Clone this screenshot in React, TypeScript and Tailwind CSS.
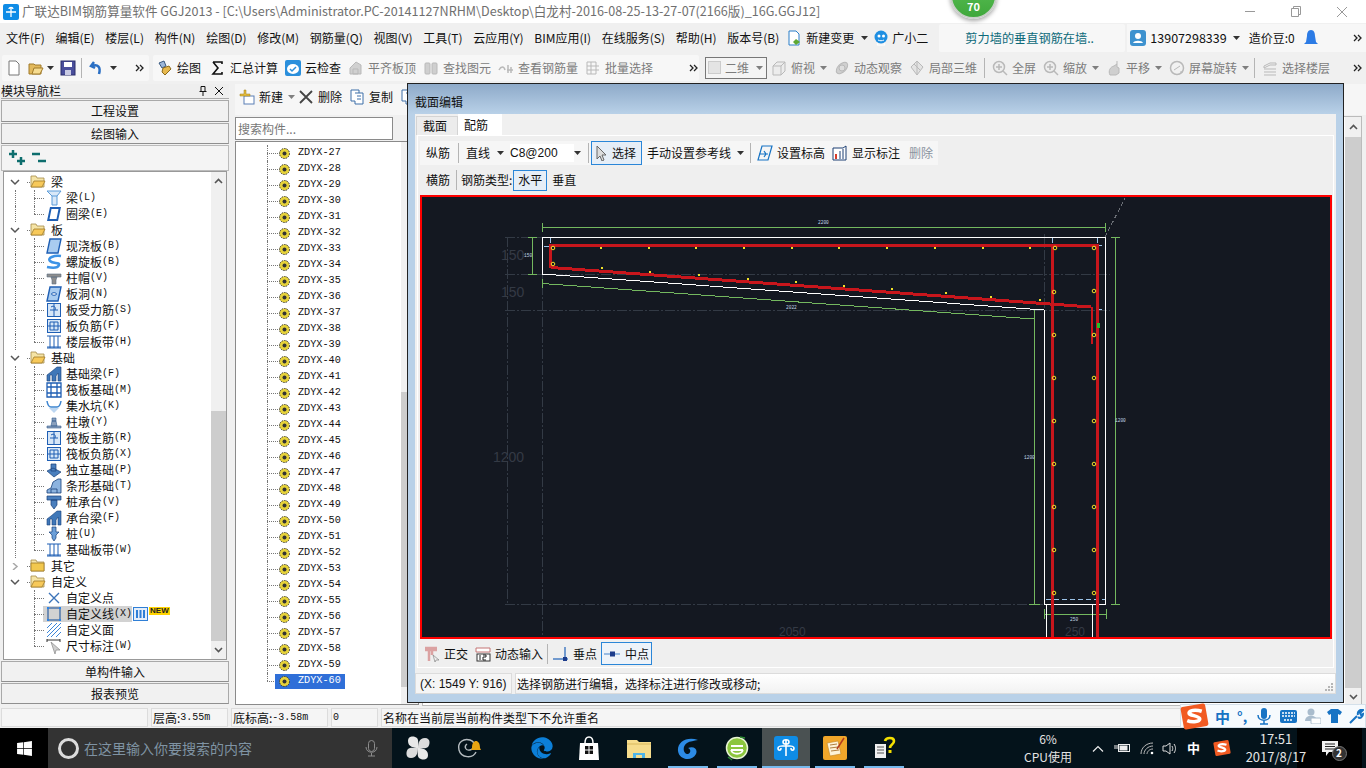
import React from "react"
import { FaWindows, FaEdge } from "react-icons/fa"

const Caret = ({ className = "" }: { className?: string }) => (
  <svg width="7" height="4" viewBox="0 0 7 4" className={className}>
    <path d="M0 0h7L3.500 4z" fill="#333" />
  </svg>
)

const More = () => (
  <svg width="9" height="8" viewBox="0 0 9 8" fill="none" stroke="#222" strokeWidth="1.300" className="shrink-0">
    <path d="M1 1l3 3-3 3M5 1l3 3-3 3" />
  </svg>
)

const Sep = ({ className = "" }: { className?: string }) => <div className={`h-[20px] w-px bg-[#b4b4b4] ${className}`} />

// --- small app icons, drawn by hand ---
type IconProps = { kind: string }

const ToolIcon = ({ kind }: IconProps) => {
  const g = "#b9b9b9"
  return (
    <svg width="16" height="16" viewBox="0 0 16 16" fill="none" className="shrink-0">
      {kind === "new" && <path d="M3 1h7l3 3v11H3z" fill="#fff" stroke="#777" />}
      {kind === "open" && (
        <>
          <path d="M1 4h5l1 1h6v9H1z" fill="#e2b95c" stroke="#a07a2a" />
          <path d="M4 14l2-6h9l-3 6z" fill="#f6dc90" stroke="#a07a2a" />
        </>
      )}
      {kind === "save" && (
        <>
          <rect x="1" y="1" width="14" height="14" fill="#4a4f9c" stroke="#2b2e6b" />
          <rect x="4" y="2" width="8" height="5" fill="#fff" />
          <rect x="5" y="10" width="6" height="5" fill="#c9cbe4" />
        </>
      )}
      {kind === "undo" && <path d="M5 2L2 6l4 2M3 6c6-2 9 1 7 8" stroke="#2a6fc4" strokeWidth="2.500" />}
      {kind === "draw" && (
        <>
          <path d="M2 3l5-2 2 5-4 2z" fill="#9db7d8" stroke="#38587f" />
          <path d="M6 8l6-2 2 3-6 6-3-3z" fill="#e7b94e" stroke="#8b6a1d" />
        </>
      )}
      {kind === "sigma" && <path d="M3 2h9v2M12 12v2H3l5-6-5-6" stroke="#111" strokeWidth="1.600" />}
      {kind === "cloud" && (
        <>
          <rect x="0" y="0" width="16" height="16" rx="2" fill="#2a8fdc" />
          <ellipse cx="8" cy="9" rx="6" ry="5" fill="#fff" />
          <path d="M5 9l2 2 4-4" stroke="#2a8fdc" strokeWidth="1.500" />
        </>
      )}
      {kind === "flat" && <path d="M2 14V8l6-6 5 3v9zM5 9h5v5H5z" fill="#d0d0d0" stroke={g} />}
      {kind === "find" && (
        <>
          <rect x="2" y="3" width="5" height="11" rx="1" fill="#cfcfcf" stroke={g} />
          <rect x="9" y="3" width="5" height="11" rx="1" fill="#cfcfcf" stroke={g} />
        </>
      )}
      {kind === "view" && <path d="M1 10c2-4 5-4 6 0M9 10h6M10 5v8M13 7v6" stroke={g} strokeWidth="1.500" />}
      {kind === "batch" && <path d="M2 2h9v12H2zM2 6h12M2 10h12M6 2v12" stroke={g} />}
      {kind === "box" && <path d="M2 6l4-4h8v9l-4 4H2zM2 6h8v9M10 6l4-4" stroke={g} fill="#ececec" />}
      {kind === "orbit" && (
        <>
          <ellipse cx="8" cy="8" rx="7" ry="4" transform="rotate(-45 8 8)" fill="#cfcfcf" stroke={g} />
          <circle cx="8" cy="8" r="3" fill="#dedede" stroke={g} />
        </>
      )}
      {kind === "local" && <path d="M8 1l6 6-6 8-6-8zM5 4l6 6M8 1v14" stroke={g} fill="#e3e3e3" />}
      {kind === "zoom" && (
        <>
          <circle cx="7" cy="7" r="5.500" fill="#eeeeee" stroke={g} strokeWidth="1.500" />
          <path d="M11 11l4 4M7 4v6M4 7h6" stroke={g} strokeWidth="1.500" />
        </>
      )}
      {kind === "pan" && <path d="M4 15c-2-4 0-8 4-9l3-2v3l2 1v5l-3 2zM11 1v3" stroke={g} fill="#cfcfcf" />}
      {kind === "rotate" && (
        <>
          <circle cx="8" cy="8" r="6.500" stroke={g} strokeWidth="1.500" fill="#f1f1f1" />
          <path d="M5 10l6-4M11 12h3" stroke={g} />
        </>
      )}
      {kind === "floors" && <path d="M2 6l6-3h6v2H8L2 8zM2 9h12M2 12h12M2 15h12" stroke={g} />}
      {kind === "doc" && (
        <>
          <path d="M3 1h7l3 3v11H3z" fill="#fff" stroke="#2a7fc9" />
          <path d="M10 9l4 3-4 3-3-3z" fill="#5ea832" />
        </>
      )}
      {kind === "robot" && (
        <>
          <circle cx="8" cy="7" r="6.500" fill="#1f8fe2" />
          <circle cx="6" cy="6" r="1.500" fill="#fff" />
          <circle cx="10.500" cy="6" r="1.500" fill="#fff" />
          <path d="M5 10c2 1 4 1 6 0M5 13l-1 2h8l-1-2" stroke="#fff" />
        </>
      )}
      {kind === "user" && (
        <>
          <rect x="0" y="0" width="16" height="16" rx="3" fill="#3e92cf" />
          <circle cx="8" cy="6" r="3" fill="#fff" />
          <path d="M3 13c1-3 9-3 10 0z" fill="#fff" />
        </>
      )}
      {kind === "bell" && <path d="M8 0c3 0 4 3 4 6l1 6 2 2H1l2-2 1-6c0-3 1-6 4-6z" fill="#2c7be5" />}
      {kind === "add" && (
        <>
          <rect x="5" y="7" width="10" height="8" fill="#fff" stroke="#5b7fb5" />
          <path d="M5 5V1h2v4h4v2H1V5z" fill="#e3bc3c" stroke="#9d7d1b" strokeWidth=".5" />
        </>
      )}
      {kind === "x" && <path d="M2 2l12 12M14 2L2 14" stroke="#444" strokeWidth="1.800" />}
      {kind === "copy" && <path d="M2 1h8v3h4v11H6v-3H2zM6 4h4M8 7h4M8 10h4" stroke="#3d6ea8" fill="#fff" />}
      {kind === "cursor" && <path d="M3 1l9 9H8l2 5-2 1-2-5-3 3z" fill="#dcdcdc" stroke="#666" />}
      {kind === "level" && <path d="M5 1h10l-4 14H1zM2 9h9M7 6l2 3-2 3" stroke="#1673c4" strokeWidth="1.200" />}
      {kind === "mark" && (
        <>
          <path d="M1 3h10l3-2v14H1z" fill="#fff" stroke="#1d3f73" />
          <rect x="3" y="9" width="2" height="5" fill="#d83c2a" />
          <path d="M8 6v8M11 4v10" stroke="#1d3f73" />
        </>
      )}
      {kind === "ortho" && (
        <>
          <path d="M1 2h12M1 4h12M5 3v12M8 3v6" stroke="#dba2a2" strokeWidth="2.500" />
          <path d="M9 9l6 5-3 0-1 2z" fill="#eee" stroke="#777" strokeWidth=".6" />
        </>
      )}
      {kind === "dyn" && (
        <>
          <path d="M1 2h14v4H1z" fill="#fff" stroke="#c47474" />
          <rect x="2" y="8" width="13" height="7" fill="#fff" stroke="#333" />
          <path d="M5 9v5M8 9h3v2H8v3h3" stroke="#222" />
        </>
      )}
      {kind === "perp" && (
        <>
          <path d="M0 13h15M12 1v12" stroke="#4a7fc4" strokeWidth="1.500" />
          <rect x="10" y="11" width="4" height="4" fill="#1c3c8c" />
        </>
      )}
      {kind === "mid" && (
        <>
          <path d="M0 8h16" stroke="#7da8da" strokeWidth="1.500" />
          <rect x="6" y="5.500" width="5" height="5" fill="#1c3c8c" />
        </>
      )}
    </svg>
  )
}

const Tool = ({ kind, label, dim, caret, className = "" }: { kind: string; label: string; dim?: boolean; caret?: boolean; className?: string }) => (
  <div className={`flex items-center gap-[4px] ${className}`}>
    <ToolIcon kind={kind} />
    <span className={dim ? "whitespace-nowrap text-[#7c7c7c]" : "whitespace-nowrap"}>{label}</span>
    {caret && <Caret className="ml-[1px] opacity-60" />}
  </div>
)

const TreeIcon = ({ kind }: IconProps) => {
  const b = "#1f5fb4"
  const l = "#a9ccf0"
  return (
    <svg width="16" height="16" viewBox="0 0 16 16" fill="none" className="shrink-0">
      {kind === "beam" && <path d="M1 1h14l-4 5v9H6V6zM6 6h5" stroke="#5b9bd8" fill="#d8e8f8" />}
      {kind === "ring" && <path d="M4 1h11l-3 14H1zM5.500 3h7l-2 10h-7z" fill={b} fillRule="evenodd" />}
      {kind === "slab" && <path d="M4 1h11l-3 14H1z" fill={l} stroke={b} strokeWidth="1.400" />}
      {kind === "spiral" && <path d="M15 2C8 1 1 4 4 7s10 1 9 4-7 3-12 2" stroke="#3d93e6" strokeWidth="2.500" />}
      {kind === "cap" && <path d="M1 4h14v3H1zM5 7h6l-1 3v4H6v-4z" fill="#8e8e8e" stroke="#5d6e85" strokeWidth=".6" />}
      {kind === "hole" && (
        <>
          <path d="M4 1h11l-3 14H1z" fill={l} stroke={b} strokeWidth="1.400" />
          <ellipse cx="8" cy="8" rx="2.500" ry="1.300" stroke={b} fill="#fff" />
        </>
      )}
      {(kind === "grid" || kind === "rebar") && (
        <>
          <rect x="1.500" y="1.500" width="13" height="13" fill="#d6e6f7" stroke={b} />
          <path d={kind === "grid" ? "M1 8h14M8 4v8M4 4h8v8H4z" : "M4 8h8M8 1v14M5 5c3-2 5 0 4 3"} stroke={b} />
        </>
      )}
      {kind === "band" && <path d="M1 2h14M1 14h14M4 2v12M8 2v12M12 2v12M1 13h14" stroke={b} />}
      {kind === "fbeam" && <path d="M1 15V9l4-3 6-5h4v14h-3V7l-2 3v5H6V9H4v6z" fill="#3f77b8" stroke="#173f78" strokeWidth=".6" />}
      {kind === "raft" && <path d="M1 1h14v14H1zM1 5h14M1 11h14M5 1v14M11 1v14" stroke={b} strokeWidth="1.300" />}
      {kind === "pit" && (
        <>
          <path d="M1 3c1 6 3 6 4 6h6c1 0 3 0 4-6" stroke="#3d85d0" strokeWidth="1.500" />
          <path d="M3 10l5 5 5-5z" fill="#bcd6f1" />
        </>
      )}
      {kind === "pier" && <path d="M1 12h14v2H1zM5 12l1-5h4l1 5zM6 4h4v3H6z" fill="#8aa0bd" stroke="#365f92" strokeWidth=".6" />}
      {kind === "iso" && <path d="M1 9l6-3 8 4-7 5zM5 2h5v7H5z" fill="#4a7fbd" stroke="#173f78" strokeWidth=".7" />}
      {kind === "strip" && <path d="M1 15v-3l4-2 2-6 5-3h3v14zM5 15v-4h6v4" stroke="#173f78" fill="#8cb3df" strokeWidth=".8" />}
      {kind === "pilecap" && <path d="M1 2h14v4H1zM5 6h6v5l-3 4-3-4z" fill="#4a7fbd" stroke="#173f78" strokeWidth=".7" />}
      {kind === "pile" && <path d="M6 1h4v5h3l-3 3v3l-2 3-2-3V9L3 6h3z" fill="#6c9fd8" stroke="#173f78" strokeWidth=".7" />}
      {kind === "point" && <path d="M3 3l10 10M13 3L3 13" stroke="#3b73b8" strokeWidth="1.400" />}
      {kind === "line" && (
        <>
          <rect x="2" y="2" width="12" height="12" stroke="#2f5f9f" strokeWidth="1.200" />
          <path d="M1 1h2v2H1zM13 1h2v2h-2zM1 13h2v2H1zM13 13h2v2h-2z" fill="#2b83e6" />
        </>
      )}
      {kind === "face" && <path d="M1 6l5-5M1 11L11 1M1 15L15 1M5 15L15 5M10 15l5-5" stroke="#3b85d8" />}
      {kind === "dim" && (
        <>
          <path d="M1 1v3M1 2h13M14 1v3" stroke="#333" />
          <path d="M5 4l9 8-4 0-1 4z" fill="#cfcfcf" stroke="#888" strokeWidth=".7" />
        </>
      )}
    </svg>
  )
}

const Folder = ({ open }: { open?: boolean }) => (
  <svg width="16" height="14" viewBox="0 0 16 14" fill="none" className="shrink-0">
    <path d="M1 3V1h5l1 2h7v9H1z" fill="#f5e4a6" stroke="#a58a4a" strokeWidth=".8" />
    {open ? <path d="M1 12l3-6h11l-3 6z" fill="#f7c95a" stroke="#a07a2a" strokeWidth=".8" /> : <path d="M1 4h13v8H1z" fill="#f2c84e" stroke="#a07a2a" strokeWidth=".8" />}
  </svg>
)

type Row = { label: string; hot?: string; icon?: string; open?: boolean; folder?: boolean; last?: boolean; noTrunk?: boolean; picked?: boolean }

const treeRows: Row[] = [
  { label: "梁", folder: true, open: true },
  { label: "梁", hot: "(L)", icon: "beam" },
  { label: "圈梁", hot: "(E)", icon: "ring", last: true },
  { label: "板", folder: true, open: true },
  { label: "现浇板", hot: "(B)", icon: "slab" },
  { label: "螺旋板", hot: "(B)", icon: "spiral" },
  { label: "柱帽", hot: "(V)", icon: "cap" },
  { label: "板洞", hot: "(N)", icon: "hole" },
  { label: "板受力筋", hot: "(S)", icon: "rebar" },
  { label: "板负筋", hot: "(F)", icon: "grid" },
  { label: "楼层板带", hot: "(H)", icon: "band", last: true },
  { label: "基础", folder: true, open: true },
  { label: "基础梁", hot: "(F)", icon: "fbeam" },
  { label: "筏板基础", hot: "(M)", icon: "raft" },
  { label: "集水坑", hot: "(K)", icon: "pit" },
  { label: "柱墩", hot: "(Y)", icon: "pier" },
  { label: "筏板主筋", hot: "(R)", icon: "rebar" },
  { label: "筏板负筋", hot: "(X)", icon: "grid" },
  { label: "独立基础", hot: "(P)", icon: "iso" },
  { label: "条形基础", hot: "(T)", icon: "strip" },
  { label: "桩承台", hot: "(V)", icon: "pilecap" },
  { label: "承台梁", hot: "(F)", icon: "fbeam" },
  { label: "桩", hot: "(U)", icon: "pile" },
  { label: "基础板带", hot: "(W)", icon: "band", last: true },
  { label: "其它", folder: true },
  { label: "自定义", folder: true, open: true },
  { label: "自定义点", icon: "point", noTrunk: true },
  { label: "自定义线", hot: "(X)", icon: "line", noTrunk: true, picked: true },
  { label: "自定义面", icon: "face", noTrunk: true },
  { label: "尺寸标注", hot: "(W)", icon: "dim", noTrunk: true, last: true },
]

const TreeRow = ({ row }: { row: Row }) => {
  if (row.folder) {
    return (
      <div className="relative flex h-[16px] items-center">
        <svg width="10" height="7" viewBox="0 0 10 7" fill="none" className="ml-[6px]">
          {row.open ? <path d="M1 1l4 4 4-4" stroke="#555" strokeWidth="1.500" /> : <path d="M3 0l4 3.500L3 7" stroke="#a8a8a8" strokeWidth="1.500" />}
        </svg>
        <span className="ml-[7px] w-[3px] border-t border-dotted border-[#777]" />
        <Folder open={row.open} />
        <span className="ml-[5px] text-[12px] leading-none">{row.label}</span>
      </div>
    )
  }
  return (
    <div className="relative flex h-[16px] items-center pl-[39px]">
      {!row.noTrunk && <span className="absolute left-[11px] top-0 h-[16px] border-l border-dotted border-[#777]" />}
      <span className={`absolute left-[30px] top-0 border-l border-dotted border-[#777] ${row.last ? "h-[8px]" : "h-[16px]"}`} />
      <span className="absolute left-[30px] top-[8px] w-[10px] border-t border-dotted border-[#777]" />
      <div className={`flex h-[16px] items-center pl-[3px] ${row.picked ? "bg-[#d2d2d2]" : ""}`}>
        <TreeIcon kind={row.icon || "slab"} />
        <span className="ml-[4px] flex items-center whitespace-nowrap text-[12px] leading-none">
          {row.label}
          {row.hot && <span className="font-['Liberation_Mono',monospace] text-[10px]">{row.hot}</span>}
        </span>
      </div>
      {row.picked && (
        <>
          <svg width="15" height="14" viewBox="0 0 15 14" fill="none" className="ml-[1px]">
            <rect x=".5" y=".5" width="14" height="13" fill="#e4eefa" stroke="#2f7fd6" />
            <path d="M4 3v8M7.500 3v8M11 3v8" stroke="#2f7fd6" strokeWidth="2" />
          </svg>
          <span className="-mt-[7px] ml-[1px] bg-[#ffd400] px-px font-['Liberation_Sans',sans-serif] text-[8px] font-bold leading-[8px] text-[#222]">NEW</span>
        </>
      )}
    </div>
  )
}

const NavButton = ({ label, className = "" }: { label: string; className?: string }) => (
  <div className={`flex h-[21px] items-center justify-center border border-[#a9a9a9] border-b-[#8f8f8f] bg-[#f1f1f1] text-[12px] ${className}`}>{label}</div>
)

const ScrollArrow = ({ up }: { up?: boolean }) => (
  <svg width="9" height="6" viewBox="0 0 9 6" fill="none">
    <path d={up ? "M1 5l3.500-3.500L8 5" : "M1 1l3.500 3.500L8 1"} stroke="#555" strokeWidth="1.600" />
  </svg>
)

const componentNumbers = Array.from({ length: 34 }, (_, i) => i + 27)

// --- the section drawing ---
const topTicks = [600, 648, 695, 743, 791, 838, 886, 934, 982, 1029]
const slantTicks: [number, number][] = [[601, 267], [649, 271], [698, 274], [747, 278], [795, 281], [843, 285], [891, 288], [945, 292], [990, 296], [1039, 299]]
const ringPoints: [number, number][] = [[553, 248], [553, 264], [1055, 248], [1094, 248], [1054, 292], [1094, 291], [1054, 335], [1094, 335], [1054, 378], [1094, 378], [1054, 421], [1094, 421], [1054, 464], [1094, 464], [1054, 507], [1094, 507], [1054, 550], [1094, 550], [1054, 593], [1094, 593]]

const DIM = "#333a45"
const GREEN = "#74b85f"
const RED = "#c8161c"

const Drawing = () => (
  <svg viewBox="422 197 908 440" className="block h-[440px] w-[908px]" fill="none" shapeRendering="crispEdges">
    <g stroke={DIM} strokeDasharray="10 2 2 2">
      <path d="M505 237.500H542M505 274.500H1110M505 310.500H1110M505 604.500H1045" />
      <path d="M507.500 237V604M542.500 237V637M1044.500 234V310" />
      <path d="M1105 237L1125 198" stroke="#6b6f76" strokeDasharray="4 3" />
      <path d="M1092.500 604V637M1045 604H1105" strokeDasharray="3 2" />
    </g>
    <g stroke="#9cc3e8" strokeDasharray="5 3">
      <path d="M550 238V268M544 246H550M1052 238V245M1097 238V245M1097 245H1105M1097 309H1103M1046 599H1105" />
    </g>
    <g stroke={GREEN}>
      <path d="M542 227.500H1105M542 223V232M1105 223V232" />
      <path d="M532.500 237V274M528 237H537M528 274H537" />
      <path d="M542 283.500L1034 319M542 279V288" />
      <path d="M1034.500 310V604M1029 604H1040" />
      <path d="M1115.500 237V604M1111 237H1120M1111 604H1120" />
      <path d="M1044 614H1106M1044 609V619M1106 609V619" />
    </g>
    <g stroke="#fff">
      <path d="M542.500 274V237.500H1105.500V604.500H1044.500V310" />
      <path d="M542 274L1044 310" />
      <path d="M1046 637V604M1092 637V604" />
      <path d="M1096.500 307V344" />
    </g>
    <g stroke={RED}>
      <path d="M549 245.500H1099M550.500 245V268" strokeWidth="3" />
      <path d="M551 267.500L1091 307" strokeWidth="3" />
      <path d="M1052 245V637M1097.500 247V637" strokeWidth="3" />
      <path d="M1092 307V344" strokeWidth="2" />
    </g>
    <rect x="1097" y="323" width="3" height="5" fill="#22c028" />
    {topTicks.map((x) => (
      <rect key={x} x={x} y="247" width="2" height="2" fill="#f0e02a" />
    ))}
    {slantTicks.map(([x, y]) => (
      <rect key={x} x={x} y={y} width="2" height="2" fill="#f0e02a" />
    ))}
    <g stroke="#f0e02a" shapeRendering="auto">
      {ringPoints.map(([x, y]) => (
        <circle key={`${x}-${y}`} cx={x} cy={y} r="1.800" />
      ))}
    </g>
    <g shapeRendering="auto" fontFamily="'Liberation Sans', sans-serif" fill="#343a45" stroke="none">
      <text x="501" y="260" fontSize="14">150</text>
      <text x="501" y="297" fontSize="14">150</text>
      <text x="493" y="462" fontSize="14">1200</text>
      <text x="779" y="636" fontSize="12">2050</text>
      <text x="1065" y="636" fontSize="12">250</text>
    </g>
    <g shapeRendering="auto" fontFamily="'Liberation Mono', monospace" fill="#c5d8ea" fontSize="4.500" stroke="none">
      <text x="818" y="224">2200</text>
      <text x="524" y="257">150</text>
      <text x="786" y="309">2022</text>
      <text x="1024" y="459">1200</text>
      <text x="1115" y="422">1200</text>
      <text x="1070" y="621">250</text>
    </g>
  </svg>
)

const Dialog = () => (
  <div className="absolute left-[407px] top-[83px] flex h-[620px] w-[937px] flex-col border border-[#222] bg-[#b9d1e8]">
    <div className="flex h-[30px] shrink-0 items-end bg-gradient-to-b from-[#8eaac9] to-[#b9d1e8] pb-[3px] pl-[7px] text-[12px]">截面编辑</div>
    <div className="ml-[7px] flex w-[921px] flex-col bg-[#f0f0f0]">
      <div className="flex h-[21px] items-end pl-[1px] text-[12px]">
        <div className="flex h-[19px] w-[42px] items-center border border-b-0 border-[#d4d4d4] bg-[#ececec] pl-[6px]">截面</div>
        <div className="flex h-[21px] w-[44px] items-center bg-white pl-[6px]">配筋</div>
      </div>
      <div className="ml-[2px] flex h-[533px] w-[917px] flex-col border border-white bg-[#efefef] pl-[2px] text-[12px]">
        <div className="mt-[5px] flex h-[24px] items-center">
          <div className="flex h-[24px] items-center bg-[#f6f6f6] pl-[6px] pr-[5px]">
            <span>纵筋</span>
            <Sep className="ml-[8px]" />
            <span className="ml-[7px]">直线</span>
            <Caret className="ml-[7px]" />
            <span className="ml-[6px] w-[64px] bg-white font-['Liberation_Sans',sans-serif] text-[12px]">C8@200</span>
            <Caret />
            <Sep className="ml-[7px]" />
            <div className="ml-[2px] flex h-[24px] w-[51px] items-center gap-[2px] border border-[#2a86d8] bg-[#e6eef7] pl-[2px]">
              <ToolIcon kind="cursor" />
              <span>选择</span>
            </div>
            <span className="ml-[5px]">手动设置参考线</span>
            <Caret className="ml-[6px]" />
            <Sep className="ml-[6px]" />
            <Tool kind="level" label="设置标高" className="ml-[6px]" />
            <Tool kind="mark" label="显示标注" className="ml-[7px]" />
            <span className="ml-[9px] text-[#8a93a0]">删除</span>
          </div>
        </div>
        <div className="mt-[5px] flex h-[20px] items-center pl-[6px]">
          <span>横筋</span>
          <Sep className="ml-[6px] h-[16px]" />
          <span className="ml-[4px]">钢筋类型:</span>
          <div className="ml-[1px] flex h-[21px] w-[34px] items-center justify-center border border-[#2a86d8] bg-[#e6eef7]">水平</div>
          <span className="ml-[5px]">垂直</span>
        </div>
        <div className="mt-[5px] h-[444px] w-[912px] border-2 border-[#ff0000] bg-[#141821]">
          <Drawing />
        </div>
        <div className="mt-[2px] flex h-[25px] items-center pl-[4px]">
          <Tool kind="ortho" label="正交" />
          <Tool kind="dyn" label="动态输入" className="ml-[7px]" />
          <Sep className="ml-[4px]" />
          <Tool kind="perp" label="垂点" className="ml-[5px]" />
          <div className="ml-[4px] flex h-[23px] w-[51px] items-center gap-[5px] border border-[#2a86d8] bg-[#eef3f9] pl-[2px]">
            <ToolIcon kind="mid" />
            <span>中点</span>
          </div>
        </div>
      </div>
      <div className="h-[5px] bg-[#efefef]" />
      <div className="flex h-[21px] gap-[3px] bg-[#f0f0f0] text-[12px]">
        <div className="flex w-[97px] items-center border border-[#dcdcdc] bg-[#f5f5f5] pl-[4px] font-['Liberation_Sans',sans-serif]">(X: 1549 Y: 916)</div>
        <div className="relative flex flex-1 items-center border border-[#dcdcdc] bg-gradient-to-b from-white to-[#f2f2f2] pl-[1px]">
          选择钢筋进行编辑，选择标注进行修改或移动;
          <svg width="10" height="10" viewBox="0 0 10 10" className="absolute bottom-[1px] right-[1px]">
            <path d="M7 1h2v2H7zM4 4h2v2H4zM7 4h2v2H7zM1 7h2v2H1zM4 7h2v2H4zM7 7h2v2H7z" fill="#b5b5b5" />
          </svg>
        </div>
      </div>
    </div>
  </div>
)

const SogouLogo = ({ size }: { size: number }) => (
  <svg width={size} height={size} viewBox="0 0 28 28">
    <rect x="2" y="3" width="24" height="22" rx="2" fill="#f15a22" transform="rotate(-10 14 14)" />
    <path d="M21 9c-3-1-10-2-12 1s9 3 10 6-7 4-12 2" fill="none" stroke="#fff" strokeWidth="3.500" />
  </svg>
)

const SogouBar = () => (
  <div className="absolute left-[1180px] top-[704px] flex h-[24px] w-[186px] items-center border border-[#d4e0ea] bg-[#f6fafd] pl-[34px]">
    <div className="absolute -left-[1px] -top-[3px]">
      <SogouLogo size={29} />
    </div>
    <span className="text-[15px] font-bold leading-none text-[#1673c4]">中</span>
    <span className="ml-[7px] text-[14px] font-bold leading-none text-[#1673c4]">°,</span>
    <svg width="14" height="17" viewBox="0 0 14 17" className="ml-[10px]" fill="none">
      <rect x="4" y="0" width="6" height="11" rx="3" fill="#1673c4" />
      <path d="M1 7c0 7 12 7 12 0M7 13v3M3 16h8" stroke="#1673c4" strokeWidth="1.500" />
    </svg>
    <svg width="17" height="13" viewBox="0 0 17 13" className="ml-[9px]">
      <rect width="17" height="13" rx="2" fill="#1673c4" />
      <path d="M2 3h13M2 6h13M4 10h9" stroke="#fff" strokeWidth="1.500" strokeDasharray="2 1" />
    </svg>
    <svg width="16" height="16" viewBox="0 0 16 16" className="ml-[8px]">
      <circle cx="6" cy="4" r="3.500" fill="#a9bccd" />
      <path d="M0 13c0-7 12-7 12 0z" fill="#a9bccd" />
      <rect x="6" y="10" width="10" height="6" rx="1" fill="#fff" stroke="#a9bccd" />
    </svg>
    <svg width="15" height="14" viewBox="0 0 15 14" className="ml-[6px]">
      <path d="M4 0h7l4 3-2 3-2-1v9H4V5L2 6 0 3z" fill="#1673c4" />
    </svg>
    <svg width="15" height="15" viewBox="0 0 15 15" className="ml-[7px]" fill="none">
      <path d="M1 14l7-7M9 6c-1-3 2-6 5-5l-3 3 1 2 2-1c0 3-3 5-5 3" stroke="#1673c4" strokeWidth="2" />
    </svg>
  </div>
)

const AppGlyph = ({ kind }: IconProps) => (
  <svg width="26" height="26" viewBox="0 0 26 26" fill="none">
    {kind === "fan" && (
      <>
        <path d="M13 13C9 13 3 12 3 6s7-5 9-3 1 7 1 10z" fill="#e8e8e8" />
        <path d="M13 13C9 13 3 12 3 6s7-5 9-3 1 7 1 10z" fill="#dcdcdc" transform="rotate(90 13 13)" />
        <path d="M13 13C9 13 3 12 3 6s7-5 9-3 1 7 1 10z" fill="#e8e8e8" transform="rotate(180 13 13)" />
        <path d="M13 13C9 13 3 12 3 6s7-5 9-3 1 7 1 10z" fill="#dcdcdc" transform="rotate(270 13 13)" />
      </>
    )}
    {kind === "swirl" && (
      <>
        <path d="M21 17c-3 7-15 6-17-2S9 3 15 5s5 9 0 10-6-4-3-6" stroke="#b5bcc0" strokeWidth="1.400" />
        <path d="M17 13c0-5 2-7 4-7s4 2 4 7l1 2h-10z" fill="#e9a412" />
      </>
    )}
    {kind === "store" && (
      <>
        <path d="M4 8h18l1 17H3z" fill="#fff" />
        <path d="M9 8c0-8 8-8 8 0" stroke="#fff" strokeWidth="1.500" />
        <path d="M9 11h3.500v3.500H9zM13.500 11H17v3.500h-3.500zM9 15.500h3.500V19H9zM13.500 15.500H17V19h-3.500z" fill="#111" />
      </>
    )}
    {kind === "folder" && (
      <>
        <path d="M1 5h10l2 2h12v16H1z" fill="#f6dc8c" />
        <path d="M1 9h24" stroke="#d8b85c" />
        <path d="M7 18h12v5h-3v-3h-6v3H7z" fill="#4fb4e8" />
      </>
    )}
    {kind === "g" && <path d="M23 5C12 1 2 7 3 16s14 11 18 3c2-5-2-8-8-6 3 1 3 5 0 6-5 0-6-8-1-11 3-2 7-2 11-3z" fill="#2c8be5" />}
    {kind === "e360" && (
      <>
        <circle cx="13" cy="13" r="10.500" fill="#8cc63e" stroke="#e8f4d4" strokeWidth="1.500" />
        <path d="M7 11h12M7 15h12M19 15c-2 5-10 5-12 0" stroke="#fff" strokeWidth="1.800" />
        <path d="M16 2l5 1M4 22l4 3" stroke="#2d8a32" strokeWidth="1.500" />
      </>
    )}
    {kind === "cad" && (
      <>
        <rect x="1" y="1" width="24" height="24" rx="3" fill="#0f8ce6" />
        <path d="M13 5v16M10 7c0-3 6-3 6 0s-6 3-6 0M5 13c0-3 16-3 16 0M5 13c0 3 3 3 3 0M21 13c0 3-3 3-3 0" stroke="#fff" strokeWidth="1.600" />
      </>
    )}
    {kind === "notes" && (
      <>
        <rect x="1" y="1" width="24" height="24" rx="2" fill="#f0a62a" />
        <path d="M5 8l11-2 3 13-11 2z" fill="#fdf3d8" stroke="#c98d2a" strokeWidth=".7" />
        <path d="M8 10l7-1M8 13l8-1M9 16l8-1" stroke="#b08040" />
        <path d="M22 3l-7 11" stroke="#b33b1d" strokeWidth="1.500" />
      </>
    )}
    {kind === "help" && (
      <>
        <path d="M4 9h11v14H4z" fill="#f0f0f0" />
        <path d="M6 12h7M6 15h7M6 18h7" stroke="#555" />
        <path d="M14 6c1-4 9-4 9 0s-4 3-4 7" stroke="#f5e000" strokeWidth="2.600" />
        <rect x="17.500" y="15" width="3" height="3" fill="#f5e000" />
      </>
    )}
  </svg>
)

const TaskApp = ({ children, active, line = true, className = "" }: { children: React.ReactNode; active?: boolean; line?: boolean; className?: string }) => (
  <div className={`relative flex h-[40px] items-center justify-center ${active ? "bg-[#4a5152]" : ""} ${className}`}>
    {children}
    {line && <span className="absolute bottom-0 left-0 right-0 h-[2px] bg-[#76b9ed]" />}
  </div>
)

const Taskbar = () => (
  <div className="flex h-[40px] items-center bg-[#04131b] font-['Noto_Sans_CJK_SC',sans-serif] text-white">
    <div className="flex h-[40px] w-[48px] items-center justify-center bg-black">
      <FaWindows className="text-[17px] text-white" />
    </div>
    <div className="flex h-[40px] w-[344px] items-center bg-[#333333] pl-[10px]">
      <div className="h-[21px] w-[21px] rounded-full border-[3px] border-[#dcdcdc]" />
      <span className="ml-[5px] text-[14px] text-[#7f93a3]">在这里输入你要搜索的内容</span>
      <svg width="13" height="17" viewBox="0 0 13 17" fill="none" stroke="#8c8c8c" className="ml-[113px]">
        <rect x="3.500" y=".5" width="6" height="11" rx="3" />
        <path d="M1 7c0 7 11 7 11 0M6.500 13v3M3 16h7" />
      </svg>
    </div>
    <div className="ml-[13px] flex">
      <TaskApp line={false} className="w-[26px]">
        <AppGlyph kind="fan" />
      </TaskApp>
      <TaskApp line={false} className="ml-[24px] w-[26px]">
        <AppGlyph kind="swirl" />
      </TaskApp>
      <TaskApp line={false} className="ml-[46px] w-[30px]">
        <FaEdge className="text-[22px] text-[#0c7fd8]" />
      </TaskApp>
      <TaskApp line={false} className="ml-[17px] w-[30px]">
        <AppGlyph kind="store" />
      </TaskApp>
      <TaskApp line={false} className="ml-[15px] w-[40px]">
        <AppGlyph kind="folder" />
      </TaskApp>
      <TaskApp className="ml-[9px] w-[40px]">
        <AppGlyph kind="g" />
      </TaskApp>
      <TaskApp className="ml-[9px] w-[40px]">
        <AppGlyph kind="e360" />
      </TaskApp>
      <TaskApp className="ml-[5px] w-[48px]" active>
        <AppGlyph kind="cad" />
      </TaskApp>
      <TaskApp className="ml-[5px] w-[40px]">
        <AppGlyph kind="notes" />
      </TaskApp>
      <TaskApp className="ml-[9px] w-[40px]">
        <AppGlyph kind="help" />
      </TaskApp>
    </div>
    <div className="ml-auto flex items-center">
      <div className="mr-[19px] flex w-[50px] flex-col items-center text-[12px] leading-[18px] text-[#e4e4e4]">
        <span>6%</span>
        <span className="whitespace-nowrap">CPU使用</span>
      </div>
      <svg width="12" height="7" viewBox="0 0 12 7" fill="none" stroke="#eee" strokeWidth="1.200">
        <path d="M1 6.500l5-5 5 5" />
      </svg>
      <svg width="17" height="12" viewBox="0 0 17 12" fill="none" stroke="#eee" className="ml-[10px]">
        <rect x="4.500" y="2.500" width="11" height="7" />
        <rect x="6" y="4" width="7" height="4" fill="#eee" />
        <path d="M0 6h4M1 3v2M3 3v2" />
      </svg>
      <svg width="14" height="13" viewBox="0 0 14 13" fill="none" stroke="#bbb" className="ml-[9px]">
        <path d="M1 12C1 6 6 1 13 1M4 12c0-4 4-8 9-8M7 12c0-2 2-5 6-5" />
        <circle cx="12" cy="11" r="1.300" fill="#fff" stroke="none" />
      </svg>
      <svg width="16" height="13" viewBox="0 0 16 13" fill="none" stroke="#ddd" className="ml-[8px]">
        <path d="M1 4h3l4-3v11L4 9H1zM10 4c1 2 1 3 0 5M12 2c2 3 2 6 0 9" />
      </svg>
      <span className="ml-[9px] text-[13px] font-bold text-white">中</span>
      <div className="ml-[13px]">
        <SogouLogo size={18} />
      </div>
      <div className="relative z-10 ml-[12px] flex w-[66px] flex-col items-center text-[13px] leading-[18px] text-[#e6e6e6]">
        <span>17:51</span>
        <span>2017/8/17</span>
      </div>
      <div className="-ml-[12px] flex h-[40px] w-[65px] items-center justify-center bg-black">
        <div className="relative">
          <svg width="16" height="15" viewBox="0 0 16 15">
            <path d="M0 0h16v11H7l-3 4v-4H0z" fill="#f2f2f2" />
            <path d="M3 3h10M3 5.500h10M3 8h10" stroke="#222" />
          </svg>
          <span className="absolute -bottom-[5px] -right-[9px] flex h-[15px] w-[15px] items-center justify-center rounded-full border border-[#777] bg-[#333] text-[10px] font-bold leading-none">2</span>
        </div>
      </div>
    </div>
    <div className="h-[40px] w-[4px] shrink-0 bg-[#04131b]" />
  </div>
)

const menus = ["文件(F)", "编辑(E)", "楼层(L)", "构件(N)", "绘图(D)", "修改(M)", "钢筋量(Q)", "视图(V)", "工具(T)", "云应用(Y)", "BIM应用(I)", "在线服务(S)", "帮助(H)", "版本号(B)"]

const App = () => {
  return (
    <div className="relative flex h-[768px] w-[1366px] flex-col overflow-hidden bg-[#f0f0f0] font-['Noto_Sans_CJK_SC','Liberation_Sans',sans-serif] text-[12px] text-[#111]">
      {/* title bar */}
      <div className="flex h-[23px] shrink-0 items-center bg-white pl-[3px] text-[12.600px] text-[#6f6f6f]">
        <div className="flex h-[16px] w-[16px] items-center justify-center rounded-[2px] bg-[#0f8ce6]">
          <svg width="12" height="12" viewBox="0 0 12 12" fill="none" stroke="#fff" strokeWidth="1.300">
            <path d="M6 1v10M1 6h10M4 3c0-2 4-2 4 0" />
          </svg>
        </div>
        <span className="ml-[3px] whitespace-nowrap">广联达BIM钢筋算量软件 GGJ2013 - [C:\Users\Administrator.PC-20141127NRHM\Desktop\白龙村-2016-08-25-13-27-07(2166版)_16G.GGJ12]</span>
        <div className="ml-auto mr-[19px] flex items-center gap-[36px]">
          <span className="h-px w-[10px] bg-[#999]" />
          <svg width="10" height="11" viewBox="0 0 10 11" fill="none" stroke="#999">
            <path d="M.5 2.500h7v8h-7zM2.500 2.500v-2h7v8h-2" />
          </svg>
          <svg width="10" height="10" viewBox="0 0 10 10" fill="none" stroke="#999">
            <path d="M0 0l10 10M10 0L0 10" />
          </svg>
        </div>
      </div>
      {/* menu bar */}
      <div className="flex h-[30px] shrink-0 items-center pl-[6px]">
        <div className="flex items-center gap-[10.700px]">
          {menus.map((m) => (
            <span key={m} className="whitespace-nowrap">{m}</span>
          ))}
        </div>
        <div className="ml-[7px] flex items-center gap-[4px]">
          <ToolIcon kind="doc" />
          <span>新建变更</span>
          <Caret className="ml-[3px]" />
        </div>
        <div className="ml-[5px] flex items-center gap-[3px]">
          <ToolIcon kind="robot" />
          <span>广小二</span>
        </div>
        <div className="ml-[11px] flex h-[28px] w-[186px] items-center rounded-[2px] bg-[#f7f7f7] pl-[26px] text-[12.200px] text-[#0c6a7a]">剪力墙的垂直钢筋在墙..</div>
        <div className="ml-[2px] flex h-[28px] min-w-0 flex-1 items-center justify-between bg-[#f7f7f7] pl-[3px] pr-[4px]">
          <div className="flex items-center">
            <ToolIcon kind="user" />
            <span className="ml-[4px] text-[12.500px]">13907298339</span>
            <Caret className="ml-[6px]" />
            <span className="ml-[9px]">造价豆:0</span>
            <div className="ml-[8px]">
              <ToolIcon kind="bell" />
            </div>
          </div>
          <More />
        </div>
      </div>
      {/* main toolbar */}
      <div className="flex h-[29px] shrink-0 items-center gap-[4px] pl-[2px]">
        <div className="flex h-[26px] w-[147px] items-center rounded-[2px] bg-[#f7f7f7] pl-[4px]">
          <ToolIcon kind="new" />
          <div className="ml-[6px]"><ToolIcon kind="open" /></div>
          <Caret className="ml-[3px]" />
          <div className="ml-[6px]"><ToolIcon kind="save" /></div>
          <Sep className="ml-[5px]" />
          <div className="ml-[7px]"><ToolIcon kind="undo" /></div>
          <Caret className="ml-[5px]" />
          <div className="ml-[18px]"><More /></div>
        </div>
        <div className="flex h-[26px] w-[546px] items-center gap-[7px] rounded-[2px] bg-[#f7f7f7] pl-[4px]">
          <Tool kind="draw" label="绘图" />
          <Tool kind="sigma" label="汇总计算" className="ml-[2px]" />
          <Tool kind="cloud" label="云检查" />
          <Tool kind="flat" label="平齐板顶" dim />
          <Tool kind="find" label="查找图元" dim />
          <Tool kind="view" label="查看钢筋量" dim />
          <Tool kind="batch" label="批量选择" dim />
          <div className="ml-auto mr-[1px]"><More /></div>
        </div>
        <div className="ml-[2px] flex h-[22px] w-[62px] items-center gap-[2px] border border-[#777] bg-[#f4f4f4] pl-[2px] text-[#7c7c7c]">
          <span className="h-[13px] w-[13px] border border-[#ccc] bg-[#e4e4e4]" />
          <span className="ml-[2px]">二维</span>
          <Caret className="ml-[5px] opacity-60" />
        </div>
        <div className="flex min-w-0 flex-1 items-center justify-between pr-[4px]">
          <div className="flex items-center gap-[7px]">
            <Tool kind="box" label="俯视" dim caret />
            <Tool kind="orbit" label="动态观察" dim />
            <Tool kind="local" label="局部三维" dim />
            <Sep />
            <Tool kind="zoom" label="全屏" dim />
            <Tool kind="zoom" label="缩放" dim caret />
            <Tool kind="pan" label="平移" dim caret />
            <Tool kind="rotate" label="屏幕旋转" dim caret />
            <Sep className="-ml-[2px]" />
            <Tool kind="floors" label="选择楼层" dim />
          </div>
          <More />
        </div>
      </div>
      {/* main area */}
      <div className="flex h-[625px] shrink-0 pt-[2px]">
        <div className="ml-[1px] flex h-[620px] w-[228px] flex-col">
          <div className="flex h-[15px] items-center justify-between border-b border-[#aaa] bg-[#eeeeee] pr-[6px] text-[12px] leading-none">
            <span>模块导航栏</span>
            <span className="flex items-center gap-[8px]">
              <svg width="8" height="10" viewBox="0 0 8 10" fill="none" stroke="#111">
                <path d="M2 .5h4v5H2zM.5 5.500h7M4 6v4" />
              </svg>
              <svg width="8" height="8" viewBox="0 0 8 8" fill="none" stroke="#111">
                <path d="M0 0l8 8M8 0L0 8" />
              </svg>
            </span>
          </div>
          <NavButton label="工程设置" className="mt-[1px] h-[22px]" />
          <NavButton label="绘图输入" className="mt-px" />
          <div className="mt-px flex h-[26px] items-center border border-[#bbb] bg-[#f4f4f4] pl-[6px]">
            <svg width="40" height="18" viewBox="0 0 40 18" fill="none" stroke="#0e6e6e" strokeWidth="2.500">
              <path d="M1 5h8M5 1v8M9 12h8M13 8v8M24 5h8M30 12h8" />
            </svg>
          </div>
          <div className="ml-[2px] flex h-[489px] w-[224px] border border-[#999] bg-white">
            <div className="flex-1 pt-[2px]">
              {treeRows.map((r, i) => (
                <TreeRow key={i} row={r} />
              ))}
            </div>
            <div className="flex w-[15px] flex-col items-center bg-[#f0f0f0]">
              <div className="flex h-[17px] items-center justify-center"><ScrollArrow up /></div>
              <div className="h-[222px]" />
              <div className="h-[230px] w-full bg-[#cdcdcd]" />
              <div className="flex flex-1 items-center justify-center"><ScrollArrow /></div>
            </div>
          </div>
          <NavButton label="单构件输入" className="mt-px" />
          <NavButton label="报表预览" className="mt-px" />
        </div>
        <div className="ml-[6px] flex h-[622px] w-[184px] flex-col">
          <div className="flex h-[31px] items-center gap-[3px] overflow-hidden bg-[#f6f6f6] pb-[6px] pl-[4px]">
            <Tool kind="add" label="新建" caret />
            <Tool kind="x" label="删除" />
            <Tool kind="copy" label="复制" className="ml-[4px]" />
            <div className="ml-[4px]"><ToolIcon kind="copy" /></div>
          </div>
          <div className="mt-[2px] h-[23px] w-[158px] border border-[#8a8a8a] bg-white pl-[2px] leading-[21px] text-[#777]">搜索构件...</div>
          <div className="mt-[1px] flex h-[564px] border border-[#8a8a8a] bg-white">
            <div className="flex-1 pt-[3px]">
              {componentNumbers.map((n) => (
                <div key={n} className="relative flex h-[16px] items-center pl-[31px]">
                  <span className={`absolute left-[31px] top-0 border-l border-dotted border-[#777] ${n === 60 ? "h-[8px]" : "h-[16px]"}`} />
                  <span className="w-[11px] border-t border-dotted border-[#777]" />
                  <div className={`-ml-[3px] flex h-[15px] items-center pl-[4px] pr-[4px] ${n === 60 ? "bg-[#2f6fd8] text-white" : ""}`}>
                    <svg width="11" height="11" viewBox="0 0 11 11" className="shrink-0">
                      <circle cx="5.500" cy="5.500" r="5" fill="#e6d23a" stroke="#333" strokeDasharray="1.500 1" />
                      <circle cx="5.500" cy="5.500" r="2" fill="#333" />
                    </svg>
                    <span className="ml-[8px] font-['Liberation_Mono',monospace] text-[10.200px] leading-[14px]">ZDYX-{n}</span>
                  </div>
                </div>
              ))}
            </div>
            <div className="flex w-[17px] flex-col items-center bg-[#f0f0f0]">
              <div className="h-[250px]" />
              <div className="h-[295px] w-full bg-[#cdcdcd]" />
            </div>
          </div>
        </div>
        <div className="ml-[3px] flex h-[622px] flex-1 flex-col">
          <div className="h-[31px] bg-[#f6f6f6]" />
          <div className="mr-[4px] mt-[1px] flex flex-1 justify-end border border-[#bbb] bg-white">
            <div className="flex w-[16px] flex-col items-center bg-[#f0f0f0]">
              <div className="flex h-[20px] items-center justify-center"><ScrollArrow up /></div>
              <div className="w-full flex-1 bg-[#cdcdcd]" />
              <div className="flex h-[17px] items-center justify-center"><ScrollArrow /></div>
            </div>
          </div>
        </div>
      </div>
      {/* status bar */}
      <div className="flex h-[21px] shrink-0 items-center gap-[3px] pl-[1px] text-[12px]">
        <div className="h-[19px] w-[147px] border border-[#dcdcdc] bg-[#f5f5f5]" />
        <div className="flex h-[19px] w-[77px] items-center border border-[#dcdcdc] bg-[#f5f5f5] pl-[1px]">
          层高:<span className="font-['Liberation_Mono',monospace] text-[10px]">3.55m</span>
        </div>
        <div className="flex h-[19px] w-[97px] items-center border border-[#dcdcdc] bg-[#f5f5f5] pl-[1px]">
          底标高:<span className="font-['Liberation_Mono',monospace] text-[10px]">-3.58m</span>
        </div>
        <div className="flex h-[19px] w-[47px] items-center border border-[#dcdcdc] bg-[#f5f5f5] pl-[1px] font-['Liberation_Mono',monospace] text-[10px]">0</div>
        <div className="flex h-[19px] flex-1 items-center border border-[#dcdcdc] bg-[#f5f5f5] pl-[1px]">名称在当前层当前构件类型下不允许重名</div>
      </div>
      <Taskbar />

      {/* floating items */}
      <Dialog />
      <SogouBar />
      <div className="absolute -top-[28px] left-[950px] flex h-[47px] w-[47px] items-end justify-center rounded-full border-[2px] border-[#c9cfc9] bg-gradient-to-b from-[#5fc35a] to-[#3fa83b] pb-[5px] text-[11px] font-bold leading-none text-white shadow-[0_2px_4px_rgba(0,0,0,0.35)]">70</div>
    </div>
  )
}

export default App
